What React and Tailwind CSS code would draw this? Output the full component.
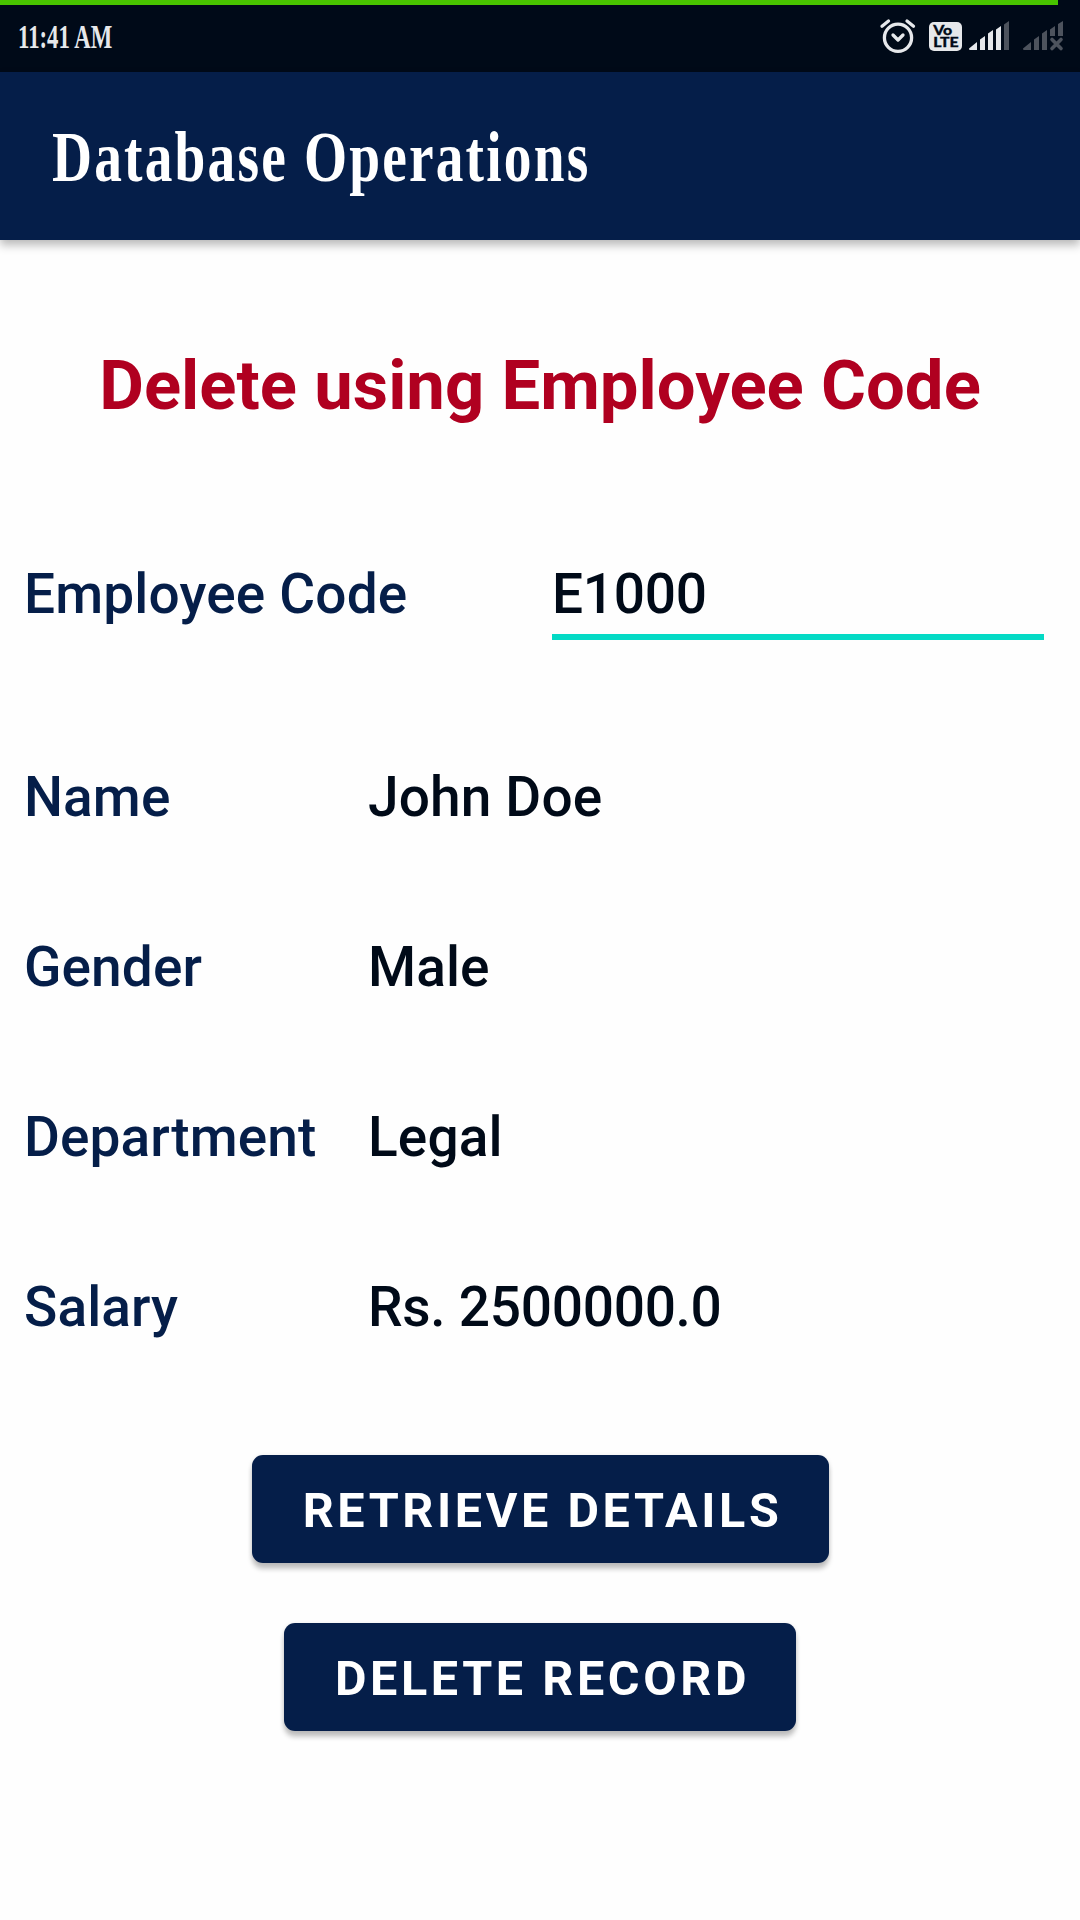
const rows = [
  ["Name", "John Doe", "tracking-[0.15px]"],
  ["Gender", "Male", "tracking-[0.1px]"],
  ["Department", "Legal", "tracking-[0.15px]"],
  ["Salary", "Rs. 2500000.0", "tracking-[-0.28px]"],
];

function StatusIcons() {
  return (
    <svg className="block h-10 w-[190px]" viewBox="876 16 190 40" fill="none" aria-hidden="true">
      <g stroke="#e6e8eb" strokeWidth="3.3" strokeLinecap="round" strokeLinejoin="round">
        <circle cx="898" cy="37.8" r="13.6" />
        <path d="M882 26.2 888.5 21M913.500 26.200l-6.500-5.200M893 35l5 5 5-5" />
      </g>
      <rect x="929" y="22" width="33" height="29" rx="5" fill="#e6e8eb" />
      <g fill="#000a18" stroke="#000a18" strokeWidth="0.300" fontFamily="Lato, sans-serif" fontWeight="900">
        <text x="933.2" y="34.6" fontSize="13" textLength="19" lengthAdjust="spacingAndGlyphs">Vo</text>
        <text x="933.2" y="47.4" fontSize="13" textLength="25.500" lengthAdjust="spacingAndGlyphs">LTE</text>
      </g>
      <path
        d="M969 48.500 977 42v8h-7q-1 0-1-1.500ZM980 39.500 985 36v14h-5ZM988 33.500l5-3.500v20h-5ZM996 29.500l5-3.500v24h-5Z"
        fill="#e6e8eb"
      />
      <path d="M1004 24.500 1009 21v29h-5Z" fill="#4d535d" />
      <path
        d="M1023 48.500 1031 42v8h-7q-1 0-1-1.500ZM1034 39.500l5-3.500v14h-5ZM1042 33.500l5-3.500v20h-5ZM1050 29.500l5-3.500v10h-5ZM1058 24l5-3v15h-5Z"
        fill="#4d535d"
      />
      <path d="m1052 39.500 9 9m0-9-9 9" stroke="#4d535d" strokeWidth="3.600" strokeLinecap="round" />
    </svg>
  );
}

function ActionButton({ children, className }) {
  return (
    <button
      className={`flex h-[108px] items-center justify-center rounded-[11px] bg-[#051e49] pl-[5px] pt-[5px] text-[48.5px] font-bold leading-none tracking-[3.6px] text-white shadow-[0_6px_5px_rgba(0,0,0,0.22),0_1px_5px_rgba(0,0,0,0.10)] ${className}`}
    >
      {children}
    </button>
  );
}

export default function App() {
  return (
    <div className="flex h-[1920px] w-[1080px] flex-col overflow-hidden bg-[#fefefe] font-['Roboto',sans-serif] font-medium">
      <div className="h-[5px] w-full bg-[#000a18]">
        <div className="h-full w-[1058px] bg-[#48c400]" />
      </div>
      <div className="flex h-[67px] items-start justify-between bg-[#000a18] pl-[18px] pr-[14px] pt-[11px]">
        <span className="mt-[4px] origin-left scale-x-[0.67] whitespace-nowrap font-['Liberation_Serif',serif] text-[34px] font-bold leading-[34px] text-[#e6e8eb]">11:41 AM</span>
        <StatusIcons />
      </div>
      <header className="flex h-[168px] shrink-0 items-center bg-[#051e49] pl-[52px] pt-[2px] shadow-[0_5px_9px_rgba(0,0,0,0.28)]">
        <h1 className="origin-left scale-x-[0.78] whitespace-nowrap font-['Liberation_Serif',serif] text-[71px] font-bold leading-none tracking-[2.8px] text-white">Database Operations</h1>
      </header>
      <main className="flex flex-col">
        <h2 className="mt-[106px] text-center text-[68.8px] font-bold leading-[80px] tracking-[0.04px] text-[#b00020]">Delete using Employee Code</h2>
        <div className="mt-[128px] flex h-[86px] items-start pl-[24px] text-[55px] leading-[80px]">
          <label className="w-[528px] tracking-[0.15px] text-[#051e49]">Employee Code</label>
          <div className="h-[86px] w-[492px] border-b-[6px] border-[#03dac5] tracking-[-0.28px] text-[#000a18]">E1000</div>
        </div>
        <dl className="mt-[72px] flex flex-col pl-[24px] text-[55px] leading-[170px]">
          {rows.map(([label, value, tracking]) => (
            <div key={label} className="flex h-[170px]">
              <dt className="w-[344px] tracking-[0.1px] text-[#051e49]">{label}</dt>
              <dd className={`text-[#000a18] ${tracking}`}>{value}</dd>
            </div>
          ))}
        </dl>
        <div className="mt-[63px] flex flex-col items-center gap-[60px]">
          <ActionButton className="w-[577px]">RETRIEVE DETAILS</ActionButton>
          <ActionButton className="w-[512px]">DELETE RECORD</ActionButton>
        </div>
      </main>
    </div>
  );
}
